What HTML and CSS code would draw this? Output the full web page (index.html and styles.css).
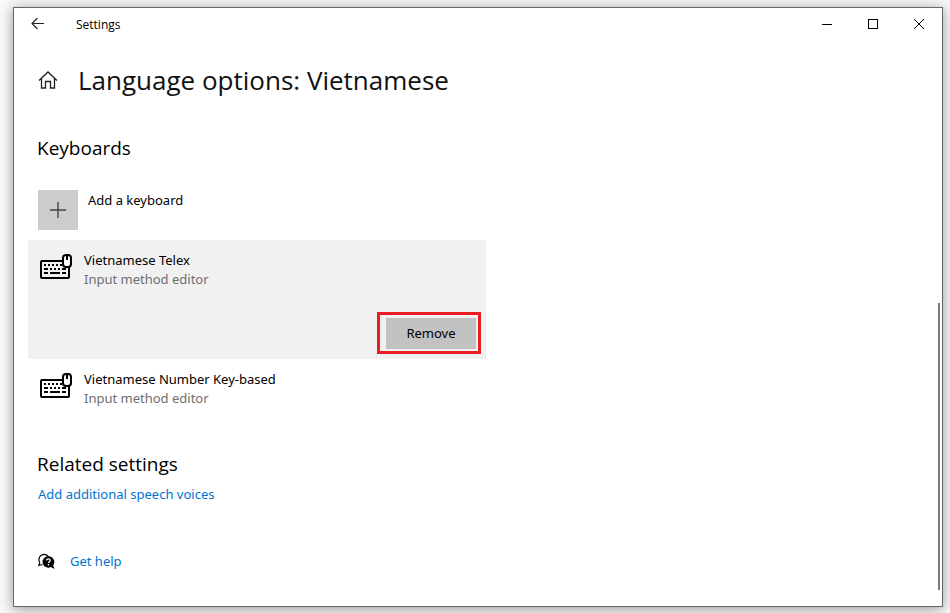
FILE: index.html
```
<!DOCTYPE html>
<html lang="en">
<head>
    <meta charset="UTF-8">
    <meta name="viewport" content="width=device-width, initial-scale=1.0">
    <title>Settings</title>
    <link rel="stylesheet" href="styles.css">
</head>
<body>
    <!-- Shared icons -->
    <svg class="sprite" aria-hidden="true">
        <symbol id="icon-keyboard" viewBox="0 0 32 26">
            <rect x="1" y="8" width="28" height="17" rx="1" fill="none" stroke="#000" stroke-width="2"/>
            <path d="M4 12h2M8 12h2M12 12h2M16 12h2M20 12h2M4 16h4M10 16h2M14 16h2M18 16h2M22 16h4M4 20h4M10 20h10M22 20h4" stroke="#000" stroke-width="2"/>
            <rect class="mouse" x="23" y="2" width="8" height="12" rx="3" stroke="#000" stroke-width="2"/>
            <path d="M27 2v5" stroke="#000" stroke-width="2"/>
        </symbol>
    </svg>

    <div class="window">
        <div class="titlebar">
            <button class="back-button" aria-label="Back">
                <svg width="14" height="12" viewBox="0 0 14 12"><path d="M13 5.500H1M6.500 0L1 5.500 6.500 11" fill="none" stroke="#222" stroke-width="1.200"/></svg>
            </button>
            <span class="titlebar-text">Settings</span>
            <div class="window-controls">
                <button aria-label="Minimize">
                    <svg width="10" height="10"><path d="M0 5.500h10" stroke="#000"/></svg>
                </button>
                <button aria-label="Maximize">
                    <svg width="10" height="10"><rect x=".5" y=".5" width="9" height="9" fill="none" stroke="#000"/></svg>
                </button>
                <button aria-label="Close">
                    <svg width="10" height="10"><path d="M0 0l10 10M10 0L0 10" stroke="#000"/></svg>
                </button>
            </div>
        </div>

        <main class="content">
            <header class="page-header">
                <a href="#" class="home-link" aria-label="Home">
                    <svg width="20" height="20" viewBox="0 0 20 20"><path d="M1 10.500L10 2l9 8.500M3.500 8.500v9.500h4v-6.500h5V18h4V8.500" fill="none" stroke="#222" stroke-width="1.300"/></svg>
                </a>
                <h1>Language options: Vietnamese</h1>
            </header>

            <section class="keyboards">
                <h2>Keyboards</h2>
                <button class="add-keyboard">
                    <span class="add-tile">
                        <svg width="16" height="16"><path d="M8 0v16M0 8h16" stroke="#444" stroke-width="1.400"/></svg>
                    </span>
                    <span class="add-label">Add a keyboard</span>
                </button>

                <ul class="keyboard-list">
                    <li class="keyboard selected">
                        <svg class="keyboard-icon" width="32" height="26"><use href="#icon-keyboard"/></svg>
                        <div class="keyboard-info">
                            <p class="keyboard-name">Vietnamese Telex</p>
                            <p class="keyboard-type">Input method editor</p>
                        </div>
                        <div class="keyboard-actions">
                            <button class="remove-button">Remove</button>
                        </div>
                    </li>
                    <li class="keyboard">
                        <svg class="keyboard-icon" width="32" height="26"><use href="#icon-keyboard"/></svg>
                        <div class="keyboard-info">
                            <p class="keyboard-name">Vietnamese Number Key-based</p>
                            <p class="keyboard-type">Input method editor</p>
                        </div>
                    </li>
                </ul>
            </section>

            <section class="related">
                <h2>Related settings</h2>
                <a href="#">Add additional speech voices</a>
            </section>

            <a href="#" class="help-link">
                <svg width="18" height="18" viewBox="0 0 18 18">
                    <path d="M1.800 9.500A5.200 5.200 0 1 1 10.500 3.800M1.800 9.500L.8 12.500 4.500 11.500" fill="none" stroke="#000" stroke-width="1.200"/>
                    <path d="M10.300 3.200a5.700 5.700 0 1 0 2.500 10.800l3.700 2-1.300-3.800A5.700 5.700 0 0 0 10.300 3.200z" fill="#000"/>
                    <path d="M8.600 7.400c0-2.200 3.600-2.100 3.600 0 0 1.300-1.800 1.300-1.800 2.700M10.400 11v1.400" fill="none" stroke="#fff" stroke-width="1.300"/>
                </svg>
                <span>Get help</span>
            </a>
        </main>

        <div class="scroll-thumb"></div>
    </div>
</body>
</html>
```
FILE: styles.css
```
* {
    box-sizing: border-box;
}

body {
    display: flex;
    min-height: 100vh;
    margin: 0;
    padding: 7px 7px 6px 13px;
    background-color: #f8f8f8;
    font-family: "Noto Sans", "Segoe UI", sans-serif;
    font-size: 13px;
    line-height: 19px;
    color: #000;
}

h1,
h2,
p,
ul {
    margin: 0;
    padding: 0;
}

button {
    padding: 0;
    border: none;
    background: none;
    font: inherit;
    color: inherit;
}

svg {
    display: block;
    flex-shrink: 0;
}

a {
    color: #0073cf;
    text-decoration: none;
}

.sprite {
    position: absolute;
    width: 0;
    height: 0;
}

.window {
    position: relative;
    flex: 1;
    border: 1px solid #666;
    background-color: #fff;
    box-shadow: 0 2px 12px rgba(0, 0, 0, 0.4);
}

/* Title bar */
.titlebar {
    display: flex;
    align-items: center;
    height: 32px;
    font-family: "Open Sans", "Segoe UI", sans-serif;
    font-size: 12px;
}

.back-button {
    display: flex;
    align-items: center;
    justify-content: center;
    width: 48px;
    height: 32px;
}

.titlebar-text {
    flex: 1;
    padding-left: 14px;
}

.window-controls {
    display: flex;
}

.window-controls button {
    display: flex;
    align-items: center;
    justify-content: center;
    width: 46px;
    height: 32px;
}

/* Page */
.content {
    padding: 20px 24px;
}

.page-header {
    display: flex;
    align-items: center;
    gap: 20px;
    height: 40px;
}

h1,
h2 {
    font-family: "Open Sans", "Segoe UI", sans-serif;
    font-weight: 400;
}

h1 {
    font-size: 26px;
    line-height: 40px;
    color: #111;
}

h2 {
    margin-left: -1px;
    font-size: 19px;
    line-height: 28px;
}

.keyboards {
    margin-top: 34px;
}

.add-keyboard {
    display: flex;
    gap: 10px;
    margin-top: 28px;
    text-align: left;
}

.add-tile {
    display: flex;
    align-items: center;
    justify-content: center;
    width: 40px;
    height: 40px;
    background-color: #ccc;
}

.add-label {
    padding-top: 1px;
}

.keyboard-list {
    max-width: 458px;
    margin: 10px -10px 0;
    list-style: none;
}

.keyboard {
    display: flex;
    flex-wrap: wrap;
    column-gap: 12px;
    padding: 11px 5px 5px 12px;
}

.keyboard-icon {
    margin-top: 2px;
}

.mouse {
    fill: #fff;
}

.selected {
    background-color: #f1f1f1;
}

.keyboard-info {
    flex: 1;
}

.keyboard-type {
    color: #6e6e6e;
}

.keyboard-actions {
    display: flex;
    justify-content: flex-end;
    width: 100%;
    margin-top: 23px;
}

.remove-button {
    width: 104px;
    height: 42px;
    padding: 3px 2px 2px 6px;
    border: 3px solid #ed1c24;
    background-color: #c2c2c2;
    background-clip: content-box;
}

.related {
    margin-top: 37px;
}

.related a {
    display: block;
    margin-top: 7px;
}

.help-link {
    display: flex;
    align-items: center;
    gap: 14px;
    width: fit-content;
    margin-top: 48px;
}

/* Thin scrollbar lying over the right edge */
.scroll-thumb {
    position: absolute;
    right: 2px;
    bottom: 16px;
    width: 2px;
    height: 48%;
    background-color: #7a7a7a;
}
```
